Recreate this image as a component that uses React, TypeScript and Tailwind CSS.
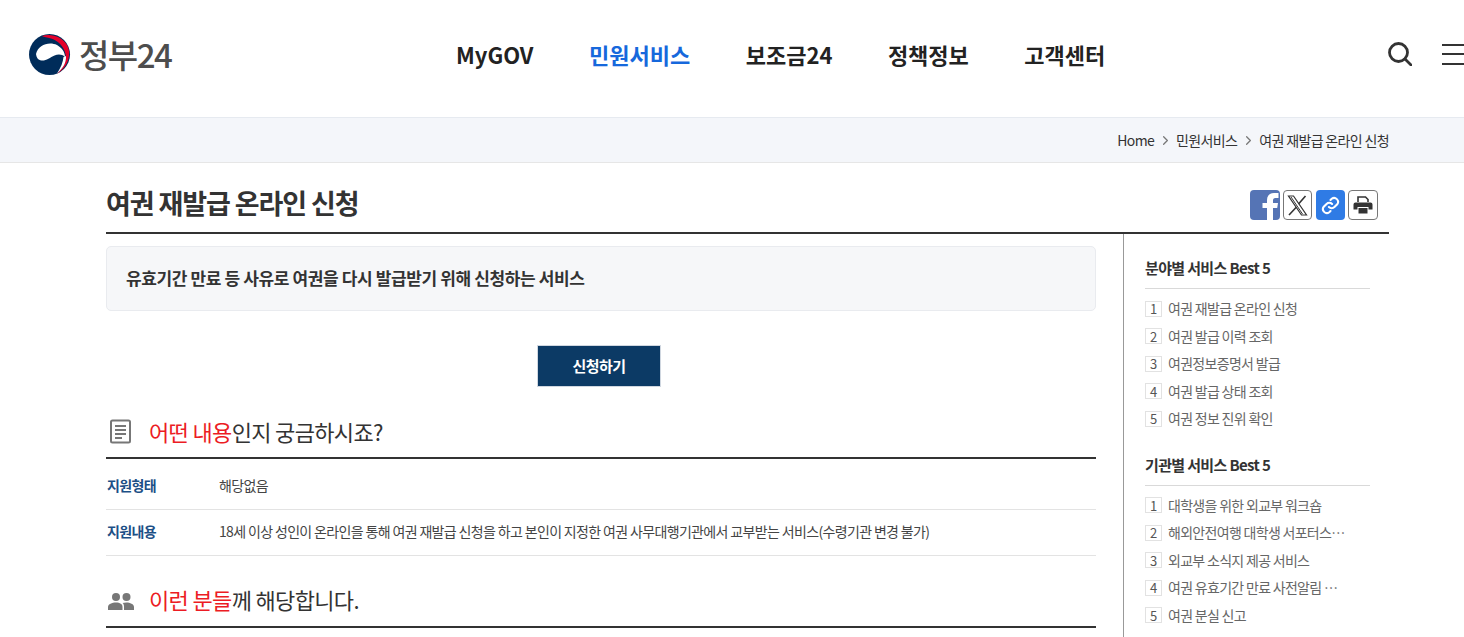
import { ChevronRight } from "lucide-react";

const FONT = "font-['Noto_Sans_CJK_KR','Noto_Sans',sans-serif]";

const NAV = [
  { label: "MyGOV" },
  { label: "민원서비스", active: true },
  { label: "보조금24" },
  { label: "정책정보" },
  { label: "고객센터" },
];

const BEST_FIELD = [
  "여권 재발급 온라인 신청",
  "여권 발급 이력 조회",
  "여권정보증명서 발급",
  "여권 발급 상태 조회",
  "여권 정보 진위 확인",
];

const BEST_ORG = [
  "대학생을 위한 외교부 워크숍",
  "해외안전여행 대학생 서포터스…",
  "외교부 소식지 제공 서비스",
  "여권 유효기간 만료 사전알림 …",
  "여권 분실 신고",
];

function Logo() {
  return (
    <div className="flex items-center gap-[8px]">
      <svg width="42" height="41" viewBox="0 0 42 41">
        <circle cx="20.500" cy="20.500" r="20.500" fill="#002c5a" />
        <path d="M13 2C21-1 33 2 38 11 43 20 39 33 28 40 34 34 38 27 36.500 20 35 12 28 6 22 4.500 18 3.500 15 3 13 2Z" fill="#e4002b" />
        <path d="M7 20C9 11 20 7 28 11 33 14 36 18 36 23 33 20 29 20 25.500 21.500 21 23.500 17 27 12.500 26.500 9 26 7.500 23.500 7 20Z" fill="#fff" />
        <path d="M37 22C37.500 29 33.500 35 28 39.500 32 33.500 34 28 34.500 23Z" fill="#fff" />
      </svg>
      <span className="text-[33px] leading-none font-medium tracking-[-1.500px] text-[#4d4d4d]">정부24</span>
    </div>
  );
}

function SearchIcon() {
  return (
    <svg width="24" height="24" viewBox="0 0 24 24" fill="none" stroke="#333" strokeWidth="2.800">
      <circle cx="10.500" cy="10.500" r="9" />
      <path d="M17 17 23 23" strokeLinecap="round" />
    </svg>
  );
}

function MenuIcon() {
  return (
    <div className="flex w-[22px] flex-col gap-[7.500px]">
      <span className="h-[2px] bg-[#333]" />
      <span className="h-[2px] bg-[#333]" />
      <span className="h-[2px] bg-[#333]" />
    </div>
  );
}

function ShareButtons() {
  return (
    <div className="flex items-center gap-[3px] pr-[11px]">
      <span className="flex h-[30px] w-[30px] items-end justify-end overflow-hidden rounded-[4px] bg-[#5574b5]">
        <svg width="19" height="27" viewBox="0 0 19 27">
          <path d="M6 27V15H1.500V10H6V7C6 2.500 8.800 0 13 0H17.500V5H14.500C12.500 5 12 6 12 7.500V10H17L16.200 15H12V27Z" fill="#fff" />
        </svg>
      </span>
      <span className="flex h-[30px] w-[29px] items-center justify-center rounded-[4px] border border-[#777] bg-white">
        <svg width="21" height="21" viewBox="0 0 21 21" fill="none" stroke="#333" strokeWidth="1.200">
          <path d="M1.500 1H6.500L19.500 20H14.500Z" />
          <path d="M18.500 1 11.500 9M9.500 12 2 20" strokeWidth="1.600" />
          <path d="M4 2 15.500 19" strokeWidth="1" />
        </svg>
      </span>
      <span className="ml-[1px] flex h-[30px] w-[29px] items-center justify-center rounded-[4px] bg-[#2f7be5]">
        <svg width="19" height="19" viewBox="0 0 24 24" fill="none" stroke="#fff" strokeWidth="2.600" strokeLinecap="round">
          <path d="M10 14a5 5 0 0 0 7 0l3.500-3.500a5 5 0 0 0-7-7L12 5" />
          <path d="M14 10a5 5 0 0 0-7 0l-3.500 3.500a5 5 0 0 0 7 7L12 19" />
        </svg>
      </span>
      <span className="flex h-[30px] w-[30px] items-center justify-center rounded-[4px] border border-[#777] bg-white">
        <svg width="20" height="18" viewBox="0 0 20 18">
          <path d="M5 6V1H12.500L15 3.500V6" fill="none" stroke="#333" strokeWidth="1.600" />
          <path d="M2.500 6.500H17.500Q19.500 6.500 19.500 8.500V13.500H15.500V11H4.500V13.500H.5V8.500Q.5 6.500 2.500 6.500Z" fill="#333" />
          <path d="M5.500 12H14.500V17.500H5.500Z" fill="#333" />
        </svg>
      </span>
    </div>
  );
}

function BestList({ title, items, className }: { title: string; items: string[]; className?: string }) {
  return (
    <section className={className}>
      <h3 className="border-b border-[#d9d9d9] pt-[1px] pb-[9px] text-[15px] leading-[22px] font-bold tracking-[-0.65px] text-[#333]">
        {title}
      </h3>
      <ul className="mt-[6px]">
        {items.map((item, i) => (
          <li key={item} className="flex h-[27.500px] items-center gap-[6px] text-[14px] tracking-[-0.7px] text-[#666]">
            <span className="flex h-[16px] w-[17px] shrink-0 items-center justify-center border border-[#e2e2e2] text-[13px] tracking-normal text-[#555]">
              {i + 1}
            </span>
            <span className="whitespace-nowrap">{item}</span>
          </li>
        ))}
      </ul>
    </section>
  );
}

function SectionHeading({ icon, red, rest, className }: { icon: React.ReactNode; red: string; rest: string; className: string }) {
  return (
    <h2 className={`flex h-[48px] items-center border-b-2 border-[#333] text-[22px] font-normal tracking-[-0.65px] text-[#333] ${className}`}>
      <span className="flex w-[43px] justify-center pr-[14px]">{icon}</span>
      <span className="text-[#ec1c24]">{red}</span>
      {rest}
    </h2>
  );
}

export default function App() {
  return (
    <div className={`${FONT} h-[637px] overflow-hidden bg-white`}>
      <header className="flex h-[118px] items-center justify-between border-b border-[#e6eaf0] pb-[9px] pl-[29px]">
        <Logo />
        <nav className="ml-[2px] flex gap-[55.500px] text-[22px] font-bold text-[#222]">
          {NAV.map((n) => (
            <a key={n.label} className={n.active ? "text-[#1668dc]" : ""}>
              {n.label}
            </a>
          ))}
        </nav>
        <div className="flex items-center gap-[30px]">
          <SearchIcon />
          <MenuIcon />
        </div>
      </header>

      <div className="flex h-[45px] items-center justify-end gap-[3.500px] border-b border-[#e6e6e6] bg-[#f4f6fa] pr-[75px] text-[14px] tracking-[-0.65px] text-[#333]">
        <span>Home</span>
        <ChevronRight size={15} className="text-[#777]" />
        <span>민원서비스</span>
        <ChevronRight size={15} className="text-[#777]" />
        <span>여권 재발급 온라인 신청</span>
      </div>

      <main className="mr-[75px] ml-[106px]">
        <div className="flex h-[71px] items-center justify-between border-b-2 border-[#333] pt-[12px]">
          <h1 className="text-[27px] font-bold tracking-[-1.1px] text-[#333]">여권 재발급 온라인 신청</h1>
          <div className="pt-[3px]">
            <ShareButtons />
          </div>
        </div>

        <div className="flex">
          <div className="w-[990px] pt-[12px]">
            <p className="flex h-[65px] items-center rounded-[5px] border border-[#e9ebef] bg-[#f6f7f9] pb-[2px] pl-[19px] text-[17px] font-bold tracking-[-0.38px] text-[#333]">
              유효기간 만료 등 사유로 여권을 다시 발급받기 위해 신청하는 서비스
            </p>
            <div className="flex justify-center pt-[34px] pb-[24px]">
              <button className="ml-[-4px] h-[42px] w-[124px] border border-[#d0d7e0] bg-[#0c3a65] text-[15px] font-bold tracking-[-0.6px] text-white">
                신청하기
              </button>
            </div>

            <SectionHeading
              className="pb-[6px]"
              icon={
                <svg width="23" height="25" viewBox="0 0 23 25" fill="none" stroke="#777" strokeWidth="2">
                  <rect x="2" y="1.500" width="19" height="22" rx="1.500" />
                  <path d="M6 7H17M6 11H17M6 15H17M6 19H13" strokeWidth="1.800" />
                </svg>
              }
              red="어떤 내용"
              rest="인지 궁금하시죠?"
            />
            <div className="flex h-[51px] items-center border-b border-[#e3e3e3] pt-[3px] text-[14px] tracking-[-0.65px] text-[#444]">
              <span className="w-[113px] pl-[1px] font-bold text-[#1c4f86]">지원형태</span>
              <span>해당없음</span>
            </div>
            <div className="flex h-[46px] items-center border-b border-[#e3e3e3] pb-[2px] text-[14px] tracking-[-0.65px] text-[#444]">
              <span className="w-[113px] pl-[1px] font-bold text-[#1c4f86]">지원내용</span>
              <span>18세 이상 성인이 온라인을 통해 여권 재발급 신청을 하고 본인이 지정한 여권 사무대행기관에서 교부받는 서비스(수령기관 변경 불가)</span>
            </div>
            <div className="mt-[24px]">
              <SectionHeading
                className="pb-[8px]"
                icon={
                  <svg width="26" height="18" viewBox="0 0 26 18" fill="#777" className="mt-[4px]">
                    <circle cx="8" cy="5" r="4" />
                    <circle cx="18.500" cy="5" r="4" />
                    <path d="M0 18V15C0 12 4 10.500 8 10.500S14.500 12 14.500 15V18Z" />
                    <path d="M16 18V14.500C16 13 15.500 11.500 14.500 11 15.500 10.700 17 10.500 18.500 10.500 22 10.500 26 12 26 15V18Z" />
                  </svg>
                }
                red="이런 분들"
                rest="께 해당합니다."
              />
            </div>
          </div>

          <aside className="ml-[27px] h-[420px] flex-1 border-l border-[#999] pt-[22px] pr-[19px] pl-[21px]">
            <BestList title="분야별 서비스 Best 5" items={BEST_FIELD} />
            <BestList title="기관별 서비스 Best 5" items={BEST_ORG} className="mt-[20px]" />
          </aside>
        </div>
      </main>
    </div>
  );
}
